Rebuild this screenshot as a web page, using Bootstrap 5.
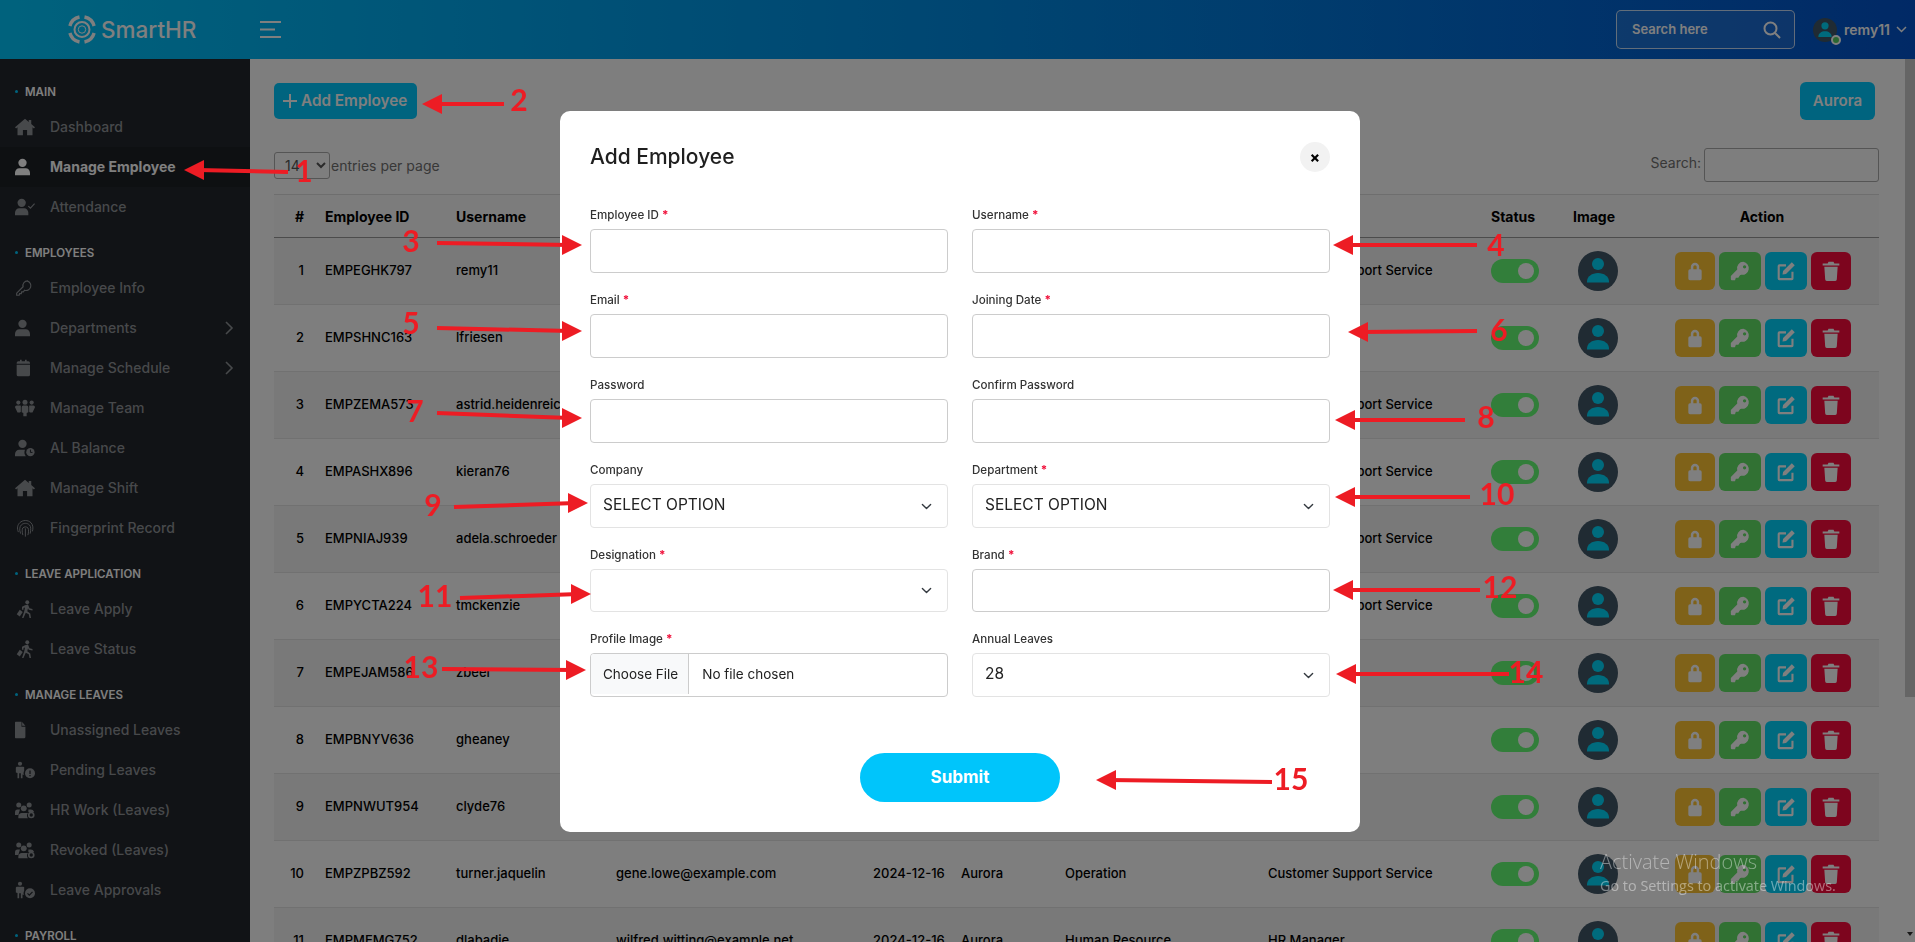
<!DOCTYPE html>
<html lang="en">
<head>
<meta charset="utf-8">
<title>Employee</title>
<link href="https://cdn.jsdelivr.net/npm/bootstrap@5.3.0/dist/css/bootstrap.min.css" rel="stylesheet">
<style>
html,body{height:100%;overflow:hidden}
body{font-family:Inter,"Noto Sans",sans-serif;background:#fdfdfd;color:#111;font-size:13px}
.shell{height:942px;display:flex;flex-direction:column}
.topbar{height:59px;flex:none;background:linear-gradient(to right,#00c5fb 0%,#0253cc 100%);color:#fff}
.brand-wrap{width:250px;padding-left:68px}
.brand-name{font-size:22.5px;font-weight:500;margin-left:5px}
.burger{width:21px;height:17px;margin-left:10px;flex:none}
.hsearch{width:179px;height:39px;border:1px solid rgba(255,255,255,.75);border-radius:5px;background:rgba(255,255,255,.1);padding:0 13px 0 15px;font-weight:600;font-size:13px;margin-right:18px}
.uname{font-weight:600;font-size:14px;margin:0 6px 0 7px}
.uavatar{position:relative;width:24px;height:24px;flex:none}
.uavatar i{position:absolute;right:-4px;bottom:-3px;width:10px;height:10px;border-radius:50%;background:#55ce63;border:2px solid #fff}
.lower{flex:1;display:flex;min-height:0}
.sidenav{width:250px;flex:none;background:#22262c;padding-top:16px;overflow:hidden;color:#8f9296}
.sec-title{height:32px;margin-top:9px;padding-left:25px;position:relative;line-height:34px;color:#fff;font-size:11.5px;font-weight:600}
.sec-title:first-child{margin-top:0}
.sec-title::before{content:"";position:absolute;left:15px;top:15px;width:3px;height:3px;border-radius:50%;background:#00c5fb}
.sitem{height:40px;display:flex;align-items:center;padding:0 0 2px 15px;font-size:14px;font-weight:500;position:relative}
.sitem svg.ic{width:20px;height:18px;margin:2px 15px 0 0;flex:none;fill:currentColor}
.sitem.on{background:#1c2025;color:#fff;font-weight:700}
.sitem .caret{position:absolute;right:16px;top:13px;width:9px;height:14px}
.mainarea{flex:1;min-width:0;padding:24px 26px 0 24px;overflow:hidden}
.btn-teal{background:#00c9ff;color:#fff;border:0;border-radius:5px;height:36px;width:143px;padding:0 0 0 9px;font-size:15.3px;font-weight:600;display:flex;align-items:center;gap:4px}
.btn-aurora{background:#00c9ff;color:#fff;border:0;border-radius:6px;height:38px;width:75px;margin-right:4px;margin-top:-1px;font-size:15px;font-weight:600}
.ctl-row{margin-top:28px;height:34px;margin-bottom:12px;color:#707070;font-size:14px}
.lenbox{width:56px;height:27px;border:1px solid #aaa;border-radius:3px;font-size:14px;padding:0 0 0 6px;background:#fdfdfd;color:#555;margin-right:1px}
.srchbox{width:175px;height:34px;border:1px solid #aaa;border-radius:3px;margin-left:3px;background:#fdfdfd}
.emp-table{table-layout:fixed;width:1605px;margin:0;font-size:13px;--bs-table-bg:transparent;--bs-table-striped-bg:rgba(0,0,0,.04);--bs-table-striped-color:#000;--bs-table-color:#000}
.emp-table th{height:43px;padding:0 0 0 10px;vertical-align:middle;font-weight:700;font-size:14px;border-top:1px solid #ddd;border-bottom:1px solid #999;background:#f9f9f9}
.emp-table th.text-center{padding:0}
.emp-table td{height:67px;padding:0 0 0 10px;vertical-align:middle;border-bottom:1px solid #e2e2e2;font-weight:500}
.emp-table .numc{text-align:right;padding:0 11px 0 0}
.tgl{display:block;width:48px;height:24px;border-radius:12px;background:#64fc74;position:relative}
.tgl::after{content:"";position:absolute;right:5px;top:4px;width:16px;height:16px;border-radius:50%;background:#fff}
.pic{display:block;width:40px;height:40px;margin-left:5px}
.acts{display:flex;gap:4px;padding-left:20px}
.acts button{height:38px;width:42px;border:0;border-radius:6px;padding:0;display:flex;align-items:center;justify-content:center;color:#fff}
.acts button svg{width:20px;height:20px;fill:currentColor}
.acts .a1{background:#ffc433;width:40px}.acts .a2{background:#62e266}.acts .a3{background:#00d4ff}.acts .a4{background:#fa0a3c;width:40px}
.fakebar{width:10px;flex:none;position:relative;background:#fcfcfc}
.fakebar::before{content:"";display:block;height:638px;background:#cbcbcb}
.fakebar::after{content:"";position:absolute;left:2px;bottom:3px;border:3px solid transparent;border-top:4px solid #333}
.modal-backdrop.show{opacity:.5}
.add-modal{display:block}
.add-modal .modal-dialog{max-width:800px;width:800px;margin:111px 0 0 560px}
.add-modal .modal-content{border:0;border-radius:10px;height:721px}
.add-modal .modal-header{border:0;padding:31px 30px 0;align-items:center}
.add-modal .modal-title{font-size:21px;font-weight:500;color:#1f1f1f;line-height:30px}
.xbtn{width:30px;height:30px;border:0;border-radius:50%;background:#f2f2f2;color:#000;font-size:15px;font-weight:800;padding:0;line-height:28px;margin-top:-1px}
.add-modal .modal-body{padding:34px 30px 30px}
.fld{height:85px}
.fld.tight{height:84px}
.fld label{display:block;font-size:11.6px;font-weight:500;color:#333;line-height:18px;margin-bottom:5px}
.fld b{color:#f0123c;font-weight:700}
.fld .form-control,.fld .form-select{height:44px;border-radius:4px;border-color:#ccc;font-size:15.5px;color:#222}
.fld .form-select{border-color:#e3e3e3;padding:0 36px 2px 12px;background-position:right 14px center;background-size:13px 11px}
.fld.tight .form-control,.fld.tight .form-select{height:42.5px}
.fld input[type=file]{font-size:13.5px;padding:0 12px;line-height:38px;height:44px;overflow:hidden}
.fld input[type=file]::file-selector-button{height:40px;padding:0 10px 0 12px;margin:0 13px 0 -12px;background:#f8f9fa;color:#222}
.sub-wrap{margin-top:38px}
.btn-submit{width:200px;height:49px;border:0;border-radius:50px;background:#00c5fb;color:#fff;font-size:17px;font-weight:700}
.marks{position:absolute;left:0;top:0;z-index:2000;pointer-events:none}
.marks text{font-family:Lato,sans-serif;font-weight:700;font-size:30px;fill:#ed1c24;text-anchor:middle;dominant-baseline:middle}
.winmark{position:absolute;left:1600px;top:848px;z-index:2001;color:rgba(255,255,255,.42);font-family:"Open Sans",sans-serif;pointer-events:none}
.winmark div:first-child{font-size:20px;font-weight:300;line-height:27px}
.winmark div:last-child{font-size:14.4px;line-height:20px;margin-top:1px}
</style>
</head>
<body>
<svg width="0" height="0" class="position-absolute">
<defs>
<symbol id="i-home" viewBox="0 0 24 20"><path d="M12 0 0 10.2l1.3 1.5L3 10.3V20h6.5v-6.5h5V20H21v-9.7l1.7 1.4L24 10.2 19.5 6.4V1.5h-3v2.4z"/></symbol>
<symbol id="i-user" viewBox="0 0 24 20"><circle cx="9" cy="5" r="5"/><path d="M0 20v-3c0-3.500 2.500-5.500 5-5.500h8c2.500 0 5 2 5 5.500v3z"/></symbol>
<symbol id="i-ucheck" viewBox="0 0 24 20"><circle cx="8" cy="5" r="5"/><path d="M0 20v-3c0-3.500 2.500-5.500 5-5.500h6c2.500 0 5 2 5 5.500v3z"/><path d="m16 9 2.500 2.500L23.500 6" fill="none" stroke="currentColor" stroke-width="1.400"/></symbol>
<symbol id="i-key" viewBox="0 0 24 20"><path fill="none" stroke="currentColor" stroke-width="1.400" d="M15 1.500a5.500 5.500 0 0 0-5.300 7L2 16.200v2.500h3l.5-2h2l.5-2h2l1.500-2a5.500 5.500 0 1 0 3.500-11z"/></symbol>
<symbol id="i-cal" viewBox="0 0 24 20"><path d="M2 6h16v12a2 2 0 0 1-2 2H4a2 2 0 0 1-2-2zM2 5V4a2 2 0 0 1 2-2h2V0h2v2h4V0h2v2h2a2 2 0 0 1 2 2v1z"/></symbol>
<symbol id="i-team" viewBox="0 0 24 20"><circle cx="4" cy="3.500" r="2.500"/><circle cx="12" cy="3" r="3"/><circle cx="20" cy="3.500" r="2.500"/><path d="M0 9a2 2 0 0 1 2-2h4c.5 0 1 .2 1 .5v7l-1 1H3zM24 9a2 2 0 0 0-2-2h-4c-.5 0-1 .2-1 .5v7l1 1h3zM8 9a2 2 0 0 1 2-2h4a2 2 0 0 1 2 2v6l-2 1v4h-4v-4l-2-1z"/></symbol>
<symbol id="i-ubal" viewBox="0 0 24 20"><circle cx="9" cy="5" r="5"/><path d="M0 20v-2.500c0-3.500 2.500-5.500 5-5.500h7a8 8 0 0 0 1 8z"/><circle cx="18.500" cy="15" r="5"/><path d="M18.500 12v3.300h2.500" fill="none" stroke="#22262c" stroke-width="1.200"/></symbol>
<symbol id="i-finger" viewBox="0 0 24 24"><g fill="none" stroke="currentColor" stroke-width="1.300" stroke-linecap="round"><path d="M3 17c-2-5-1-9 2-12 4-4 11-4 15 0 3 3 3 8 2 11"/><path d="M6 19c-2-5-1-9 1-11 3-3 8-3 11 0 2 2 2 6 1 11"/><path d="M9 21c-1-4-1-7 0-9 2-2 5-2 7 0 1 2 1 6 0 9"/><path d="M12.500 13v10"/></g></symbol>
<symbol id="i-walk" viewBox="0 0 24 24"><circle cx="15" cy="3" r="2.600"/><path d="m12 7 4-1 2 5 4 1v2l-5-1-1-2-1 4 4 3 1 6h-2l-1-5-4-2-3 7H8l3-9 1-5-2 .5V13H8V9z"/><path d="m1 19 4-6 4 3-4 6z"/></symbol>
<symbol id="i-file" viewBox="0 0 24 20"><path d="M1 0h9v6h6v12a2 2 0 0 1-2 2H1a1 1 0 0 1-1-1V1a1 1 0 0 1 1-1zm10 .5L16 5h-5z" transform="scale(.78 1)"/></symbol>
<symbol id="i-pend" viewBox="0 0 24 20"><circle cx="6" cy="2.500" r="2.500"/><path d="M2 6h8a2 2 0 0 1 1 .5V11c-1 2-1 4 0 5l-2-.5V20H7v-6H5v6H3v-6.500L1 13V7z"/><circle cx="18" cy="14" r="6"/><path d="M18 10.500v4.200M18 16v1.500" stroke="#22262c" stroke-width="1.500"/></symbol>
<symbol id="i-appr" viewBox="0 0 24 20"><circle cx="6" cy="2.500" r="2.500"/><path d="M2 6h8a2 2 0 0 1 1 .5V11c-1 2-1 4 0 5l-2-.5V20H7v-6H5v6H3v-6.500L1 13V7z"/><circle cx="18" cy="14" r="6"/><path d="m15 14 2.200 2.200 3.800-4" fill="none" stroke="#22262c" stroke-width="1.500"/></symbol>
<symbol id="i-ucog" viewBox="0 0 24 20"><circle cx="4.500" cy="4" r="3"/><circle cx="17" cy="4" r="3"/><circle cx="10.500" cy="8" r="3.500"/><path d="M0 13c0-2 1-3.500 3-3.500h3L4 16H0zM4 20v-2c0-3 2-4.500 4-4.500h6c.5 0 1 .1 1.500.3-1.500 1.500-1.500 4 0 6.200zM16 9.500h3c2 0 3 1 4 3h-7z"/><circle cx="19.500" cy="16" r="3" fill="none" stroke="currentColor" stroke-width="2"/></symbol>
<symbol id="i-lock" viewBox="0 0 24 24"><path d="M7 10V7a5 5 0 0 1 10 0v3h1a2 2 0 0 1 2 2v9a2 2 0 0 1-2 2H6a2 2 0 0 1-2-2v-9a2 2 0 0 1 2-2zm3 0h4V7a2 2 0 0 0-4 0z"/></symbol>
<symbol id="i-skey" viewBox="0 0 24 24"><path d="M16 1a7.500 7.500 0 0 0-7.300 9.300L1 18v4a1 1 0 0 0 1 1h4l1-3h3l2-3 1.300-.5A7.500 7.500 0 1 0 16 1zm1.500 4a2 2 0 1 1 0 4 2 2 0 0 1 0-4z"/></symbol>
<symbol id="i-edit" viewBox="0 0 24 24"><path d="M19 1.500 22.500 5 12 15.500l-4.200.7.700-4.200z"/><path d="M12 4H4a2 2 0 0 0-2 2v15a2 2 0 0 0 2 2h15a2 2 0 0 0 2-2v-8h-2.500v7.500h-14v-14H12z"/></symbol>
<symbol id="i-trash" viewBox="0 0 24 24"><path d="M9 1h6l1 2h6v2.500H2V3h6zM4 7h16l-1 15a2 2 0 0 1-2 2H7a2 2 0 0 1-2-2z"/></symbol>
<symbol id="i-avatar" viewBox="0 0 40 40"><circle cx="20" cy="20" r="20" fill="#405666"/><circle cx="20" cy="13" r="6" fill="#00d6fa"/><path d="M9 31.500v-1c0-5 5-8.500 11-8.500s11 3.500 11 8.500v1z" fill="#00d6fa"/></symbol>
</defs>
</svg>

<div class="shell">
  <header class="topbar d-flex align-items-center">
    <div class="brand-wrap d-flex align-items-center">
      <svg width="28" height="29" viewBox="0 0 28 29" fill="none" stroke="#fff"><path stroke-width="3.400" d="M1.900 11A12.500 12.500 0 0 1 11.500 2M16.500 2A12.500 12.500 0 0 1 26.100 11M26.100 18A12.500 12.500 0 0 1 16.500 27M11.500 27A12.500 12.500 0 0 1 1.900 18"/><circle cx="14" cy="14.500" r="7.500" stroke-width="2"/><circle cx="14" cy="14.500" r="3.700" stroke-width="1"/></svg>
      <span class="brand-name">SmartHR</span>
    </div>
    <svg class="burger" viewBox="0 0 21 17" fill="#fff"><rect width="21" height="2"/><rect y="7.500" width="15" height="2"/><rect y="15" width="21" height="2"/></svg>
    <div class="ms-auto d-flex align-items-center">
      <div class="hsearch d-flex align-items-center justify-content-between"><span>Search here</span>
        <svg width="18" height="18" viewBox="0 0 18 18" fill="none" stroke="#fff" stroke-width="2"><circle cx="7.500" cy="7.500" r="6"/><path d="m12 12 5 5"/></svg></div>
      <span class="uavatar"><svg width="24" height="24"><use href="#i-avatar"/></svg><i></i></span>
      <span class="uname">remy11</span>
      <svg width="11" height="7" viewBox="0 0 11 7" fill="none" stroke="#fff" stroke-width="1.500" class="me-2"><path d="m1 1 4.500 4.500L10 1"/></svg>
    </div>
  </header>

  <div class="lower">
    <nav class="sidenav">
      <div class="sec-title">MAIN</div>
      <div class="sitem"><svg class="ic"><use href="#i-home"/></svg>Dashboard</div>
      <div class="sitem on"><svg class="ic"><use href="#i-user"/></svg>Manage Employee</div>
      <div class="sitem"><svg class="ic"><use href="#i-ucheck"/></svg>Attendance</div>
      <div class="sec-title">EMPLOYEES</div>
      <div class="sitem"><svg class="ic"><use href="#i-key"/></svg>Employee Info</div>
      <div class="sitem"><svg class="ic"><use href="#i-user"/></svg>Departments<svg class="caret" viewBox="0 0 9 14" fill="none" stroke="currentColor" stroke-width="1.600"><path d="m1 1 6 6-6 6"/></svg></div>
      <div class="sitem"><svg class="ic"><use href="#i-cal"/></svg>Manage Schedule<svg class="caret" viewBox="0 0 9 14" fill="none" stroke="currentColor" stroke-width="1.600"><path d="m1 1 6 6-6 6"/></svg></div>
      <div class="sitem"><svg class="ic"><use href="#i-team"/></svg>Manage Team</div>
      <div class="sitem"><svg class="ic"><use href="#i-ubal"/></svg>AL Balance</div>
      <div class="sitem"><svg class="ic"><use href="#i-home"/></svg>Manage Shift</div>
      <div class="sitem"><svg class="ic"><use href="#i-finger"/></svg>Fingerprint Record</div>
      <div class="sec-title">LEAVE APPLICATION</div>
      <div class="sitem"><svg class="ic"><use href="#i-walk"/></svg>Leave Apply</div>
      <div class="sitem"><svg class="ic"><use href="#i-walk"/></svg>Leave Status</div>
      <div class="sec-title">MANAGE LEAVES</div>
      <div class="sitem"><svg class="ic"><use href="#i-file"/></svg>Unassigned Leaves</div>
      <div class="sitem"><svg class="ic"><use href="#i-pend"/></svg>Pending Leaves</div>
      <div class="sitem"><svg class="ic"><use href="#i-ucog"/></svg>HR Work (Leaves)</div>
      <div class="sitem"><svg class="ic"><use href="#i-ucog"/></svg>Revoked (Leaves)</div>
      <div class="sitem"><svg class="ic"><use href="#i-appr"/></svg>Leave Approvals</div>
      <div class="sec-title">PAYROLL</div>
    </nav>

    <main class="mainarea">
      <div class="d-flex justify-content-between align-items-start">
        <button class="btn-teal"><svg width="14" height="14" viewBox="0 0 14 14" stroke="#fff" stroke-width="2"><path d="M7 0v14M0 7h14"/></svg>Add Employee</button>
        <button class="btn-aurora">Aurora</button>
      </div>
      <div class="ctl-row d-flex justify-content-between align-items-start">
        <div class="d-flex align-items-center mt-1"><select class="lenbox"><option>14</option></select>entries per page</div>
        <div class="d-flex align-items-start"><span class="mt-1">Search:</span><input class="srchbox" type="text" aria-label="Search"></div>
      </div>
      <table class="table table-striped emp-table">
        <colgroup><col style="width:41px"><col style="width:131px"><col style="width:160px"><col style="width:257px"><col style="width:88px"><col style="width:104px"><col style="width:203px"><col style="width:223px"><col style="width:82px"><col style="width:82px"><col style="width:234px"></colgroup>
        <thead><tr><th class="numc">#</th><th>Employee ID</th><th>Username</th><th>Email</th><th>Joining Date</th><th>Company</th><th>Department</th><th>Designation</th><th>Status</th><th>Image</th><th class="text-center">Action</th></tr></thead>
        <tbody>
<tr><td class="numc">1</td><td>EMPEGHK797</td><td>remy11</td><td>remy11@example.com</td><td>2024-12-16</td><td>Aurora</td><td>Operation</td><td>Customer Support Service</td><td><span class="tgl"></span></td><td><svg class="pic"><use href="#i-avatar"/></svg></td><td><div class="acts"><button class="a1"><svg><use href="#i-lock"/></svg></button><button class="a2"><svg><use href="#i-skey"/></svg></button><button class="a3"><svg><use href="#i-edit"/></svg></button><button class="a4"><svg><use href="#i-trash"/></svg></button></div></td></tr>
<tr><td class="numc">2</td><td>EMPSHNC163</td><td>lfriesen</td><td>lfriesen@example.org</td><td>2024-12-16</td><td>Aurora</td><td>Finance</td><td>Accountant</td><td><span class="tgl"></span></td><td><svg class="pic"><use href="#i-avatar"/></svg></td><td><div class="acts"><button class="a1"><svg><use href="#i-lock"/></svg></button><button class="a2"><svg><use href="#i-skey"/></svg></button><button class="a3"><svg><use href="#i-edit"/></svg></button><button class="a4"><svg><use href="#i-trash"/></svg></button></div></td></tr>
<tr><td class="numc">3</td><td>EMPZEMA573</td><td>astrid.heidenreich</td><td>astrid@example.com</td><td>2024-12-16</td><td>Aurora</td><td>Operation</td><td>Customer Support Service</td><td><span class="tgl"></span></td><td><svg class="pic"><use href="#i-avatar"/></svg></td><td><div class="acts"><button class="a1"><svg><use href="#i-lock"/></svg></button><button class="a2"><svg><use href="#i-skey"/></svg></button><button class="a3"><svg><use href="#i-edit"/></svg></button><button class="a4"><svg><use href="#i-trash"/></svg></button></div></td></tr>
<tr><td class="numc">4</td><td>EMPASHX896</td><td>kieran76</td><td>kieran76@example.net</td><td>2024-12-16</td><td>Aurora</td><td>Operation</td><td>Customer Support Service</td><td><span class="tgl"></span></td><td><svg class="pic"><use href="#i-avatar"/></svg></td><td><div class="acts"><button class="a1"><svg><use href="#i-lock"/></svg></button><button class="a2"><svg><use href="#i-skey"/></svg></button><button class="a3"><svg><use href="#i-edit"/></svg></button><button class="a4"><svg><use href="#i-trash"/></svg></button></div></td></tr>
<tr><td class="numc">5</td><td>EMPNIAJ939</td><td>adela.schroeder</td><td>adela@example.org</td><td>2024-12-16</td><td>Aurora</td><td>Operation</td><td>Customer Support Service</td><td><span class="tgl"></span></td><td><svg class="pic"><use href="#i-avatar"/></svg></td><td><div class="acts"><button class="a1"><svg><use href="#i-lock"/></svg></button><button class="a2"><svg><use href="#i-skey"/></svg></button><button class="a3"><svg><use href="#i-edit"/></svg></button><button class="a4"><svg><use href="#i-trash"/></svg></button></div></td></tr>
<tr><td class="numc">6</td><td>EMPYCTA224</td><td>tmckenzie</td><td>tmckenzie@example.com</td><td>2024-12-16</td><td>Aurora</td><td>Operation</td><td>Customer Support Service</td><td><span class="tgl"></span></td><td><svg class="pic"><use href="#i-avatar"/></svg></td><td><div class="acts"><button class="a1"><svg><use href="#i-lock"/></svg></button><button class="a2"><svg><use href="#i-skey"/></svg></button><button class="a3"><svg><use href="#i-edit"/></svg></button><button class="a4"><svg><use href="#i-trash"/></svg></button></div></td></tr>
<tr><td class="numc">7</td><td>EMPEJAM586</td><td>zbeer</td><td>zbeer@example.net</td><td>2024-12-16</td><td>Aurora</td><td>Human Resource</td><td>HR Manager</td><td><span class="tgl"></span></td><td><svg class="pic"><use href="#i-avatar"/></svg></td><td><div class="acts"><button class="a1"><svg><use href="#i-lock"/></svg></button><button class="a2"><svg><use href="#i-skey"/></svg></button><button class="a3"><svg><use href="#i-edit"/></svg></button><button class="a4"><svg><use href="#i-trash"/></svg></button></div></td></tr>
<tr><td class="numc">8</td><td>EMPBNYV636</td><td>gheaney</td><td>gheaney@example.org</td><td>2024-12-16</td><td>Aurora</td><td>Human Resource</td><td>HR Manager</td><td><span class="tgl"></span></td><td><svg class="pic"><use href="#i-avatar"/></svg></td><td><div class="acts"><button class="a1"><svg><use href="#i-lock"/></svg></button><button class="a2"><svg><use href="#i-skey"/></svg></button><button class="a3"><svg><use href="#i-edit"/></svg></button><button class="a4"><svg><use href="#i-trash"/></svg></button></div></td></tr>
<tr><td class="numc">9</td><td>EMPNWUT954</td><td>clyde76</td><td>clyde76@example.com</td><td>2024-12-16</td><td>Aurora</td><td>Finance</td><td>Auditor</td><td><span class="tgl"></span></td><td><svg class="pic"><use href="#i-avatar"/></svg></td><td><div class="acts"><button class="a1"><svg><use href="#i-lock"/></svg></button><button class="a2"><svg><use href="#i-skey"/></svg></button><button class="a3"><svg><use href="#i-edit"/></svg></button><button class="a4"><svg><use href="#i-trash"/></svg></button></div></td></tr>
<tr><td class="numc">10</td><td>EMPZPBZ592</td><td>turner.jaquelin</td><td>gene.lowe@example.com</td><td>2024-12-16</td><td>Aurora</td><td>Operation</td><td>Customer Support Service</td><td><span class="tgl"></span></td><td><svg class="pic"><use href="#i-avatar"/></svg></td><td><div class="acts"><button class="a1"><svg><use href="#i-lock"/></svg></button><button class="a2"><svg><use href="#i-skey"/></svg></button><button class="a3"><svg><use href="#i-edit"/></svg></button><button class="a4"><svg><use href="#i-trash"/></svg></button></div></td></tr>
<tr><td class="numc">11</td><td>EMPMEMG752</td><td>dlabadie</td><td>wilfred.witting@example.net</td><td>2024-12-16</td><td>Aurora</td><td>Human Resource</td><td>HR Manager</td><td><span class="tgl"></span></td><td><svg class="pic"><use href="#i-avatar"/></svg></td><td><div class="acts"><button class="a1"><svg><use href="#i-lock"/></svg></button><button class="a2"><svg><use href="#i-skey"/></svg></button><button class="a3"><svg><use href="#i-edit"/></svg></button><button class="a4"><svg><use href="#i-trash"/></svg></button></div></td></tr>
        </tbody>
      </table>
    </main>
    <div class="fakebar"></div>
  </div>
</div>

<div class="modal-backdrop fade show"></div>
<div class="modal fade show add-modal" tabindex="-1">
  <div class="modal-dialog">
    <div class="modal-content">
      <div class="modal-header">
        <h5 class="modal-title">Add Employee</h5>
        <button class="xbtn ms-auto" type="button" aria-label="Close">×</button>
      </div>
      <div class="modal-body">
        <form>
          <div class="row">
            <div class="col-6 fld"><label>Employee ID <b>*</b></label><input class="form-control" type="text"></div>
            <div class="col-6 fld"><label>Username <b>*</b></label><input class="form-control" type="text"></div>
            <div class="col-6 fld"><label>Email <b>*</b></label><input class="form-control" type="email"></div>
            <div class="col-6 fld"><label>Joining Date <b>*</b></label><input class="form-control" type="text"></div>
            <div class="col-6 fld"><label>Password</label><input class="form-control" type="password"></div>
            <div class="col-6 fld"><label>Confirm Password</label><input class="form-control" type="password"></div>
            <div class="col-6 fld"><label>Company</label><select class="form-select"><option>SELECT OPTION</option></select></div>
            <div class="col-6 fld"><label>Department <b>*</b></label><select class="form-select"><option>SELECT OPTION</option></select></div>
            <div class="col-6 fld tight"><label>Designation <b>*</b></label><select class="form-select"><option></option></select></div>
            <div class="col-6 fld tight"><label>Brand <b>*</b></label><input class="form-control" type="text"></div>
            <div class="col-6 fld"><label>Profile Image <b>*</b></label><input class="form-control" type="file"></div>
            <div class="col-6 fld"><label>Annual Leaves</label><select class="form-select"><option>28</option></select></div>
          </div>
          <div class="sub-wrap text-center"><button class="btn-submit" type="button">Submit</button></div>
        </form>
      </div>
    </div>
  </div>
</div>

<svg class="marks" width="1915" height="942" viewBox="0 0 1915 942" stroke="#ed1c24" fill="#ed1c24">
  <g stroke-width="4">
    <path d="M288 172 198 170"/><path d="M504 104 438 104"/><path d="M437 243 570 245"/><path d="M1477 245 1345 245"/>
    <path d="M437 328 570 331"/><path d="M1477 331 1360 332"/><path d="M437 413 570 418"/><path d="M1465 420 1347 420"/>
    <path d="M454 507 576 503"/><path d="M1470 497 1347 497"/><path d="M460 598 579 594"/><path d="M1480 590 1345 590"/>
    <path d="M442 669 574 670"/><path d="M1509 674 1348 674"/><path d="M1272 782 1108 780"/>
  </g>
  <g stroke="none">
    <path d="M184 170 204 160V180z"/><path d="M422 104 442 94V114z"/>
    <path d="M582 245 562 235V255z"/><path d="M1333 245 1353 235V255z"/>
    <path d="M582 331 562 321V341z"/><path d="M1348 332 1368 322V342z"/>
    <path d="M582 418 562 408V428z"/><path d="M1335 420 1355 410V430z"/>
    <path d="M588 503 568 493V513z"/><path d="M1335 497 1355 487V507z"/>
    <path d="M591 594 571 584V604z"/><path d="M1333 590 1353 580V600z"/>
    <path d="M586 670 566 660V680z"/><path d="M1336 674 1356 664V684z"/>
    <path d="M1096 780 1116 770V790z"/>
  </g>
  <g stroke="none">
    <text x="304" y="174">1</text><text x="519" y="103">2</text><text x="411" y="244">3</text><text x="1496" y="248">4</text>
    <text x="411" y="326">5</text><text x="1499" y="333">6</text><text x="415" y="414">7</text><text x="1486" y="420">8</text>
    <text x="433" y="508">9</text><text x="1497" y="497">10</text><text x="435" y="599">11</text><text x="1500" y="590">12</text>
    <text x="421" y="670">13</text><text x="1526" y="675">14</text><text x="1291" y="782">15</text>
  </g>
</svg>
<div class="winmark"><div>Activate Windows</div><div>Go to Settings to activate Windows.</div></div>

<script src="https://cdn.jsdelivr.net/npm/bootstrap@5.3.0/dist/js/bootstrap.bundle.min.js"></script>
</body>
</html>
